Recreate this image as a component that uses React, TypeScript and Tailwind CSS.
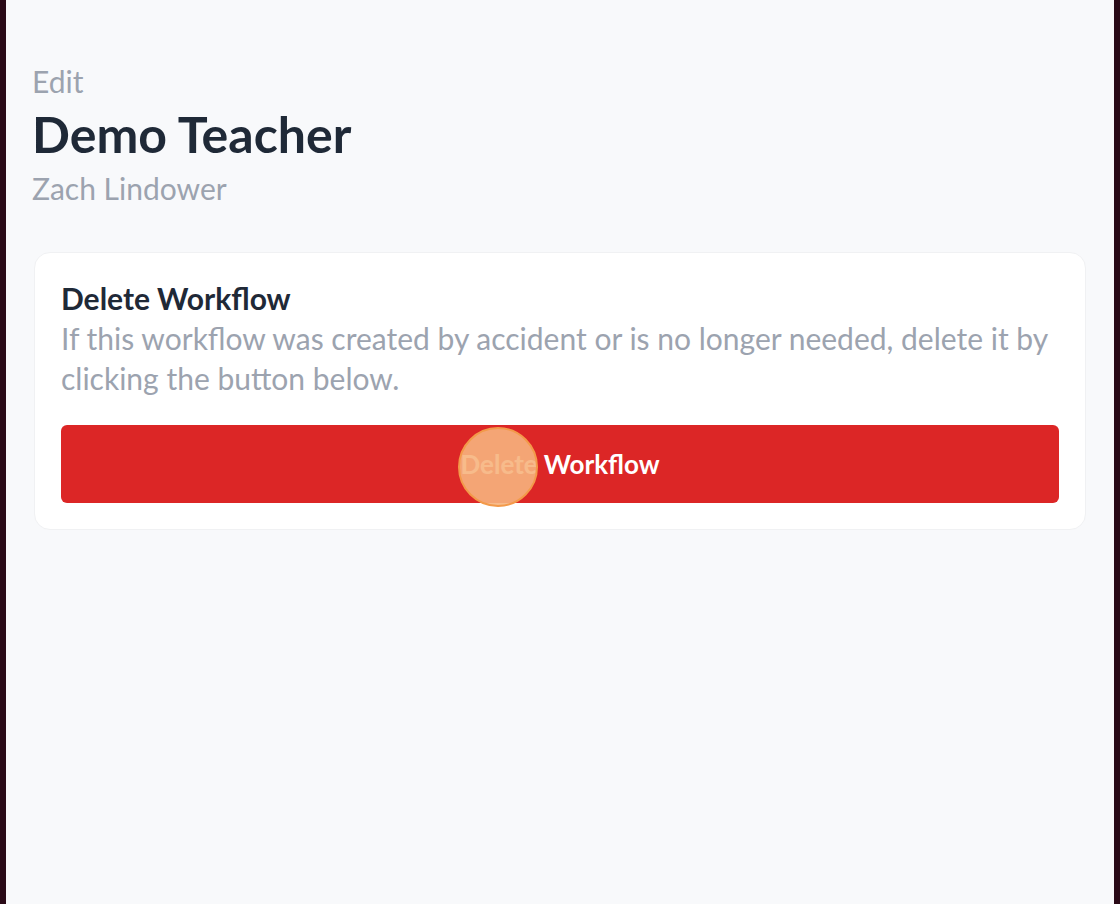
export default function App() {
    return (
        <div
            className="flex h-[904px] w-[1120px] bg-[#2a0a17]"
            style={{ fontFamily: 'Lato, "Noto Sans", sans-serif' }}
        >
            <main className="mx-[6px] flex-1 bg-[#f8f9fb] px-[28px] pt-[61px]">
                <div className="-ml-[2px]">
                    <p className="text-[30px] leading-[40px] text-[#9ca3af]">Edit</p>
                    <h1 className="text-[50px] font-bold leading-[66px] text-[#1f2937]">Demo Teacher</h1>
                    <p className="text-[30px] leading-[42px] text-[#9ca3af]">Zach Lindower</p>
                </div>

                <section className="mt-[43px] rounded-[16px] border border-[#f0f1f3] bg-white px-[26px] pb-[26px] pt-[25px]">
                    <h2 className="text-[30px] font-bold leading-[40px] text-[#1f2937]">Delete Workflow</h2>
                    <p className="text-[30px] leading-[40px] text-[#9ca3af]">
                        If this workflow was created by accident or is no longer needed, delete it by clicking the button below.
                    </p>
                    <div className="relative mt-[27px]">
                        <button className="flex h-[78px] w-full items-center justify-center rounded-[6px] bg-[#dc2626] text-[26px] font-bold text-white">
                            Delete Workflow
                        </button>
                        {/* click marker */}
                        <span className="pointer-events-none absolute left-[397px] top-[2px] h-[80px] w-[80px] rounded-full border-2 border-[#f39a4a] bg-[#f6b47e]/90" />
                    </div>
                </section>
            </main>
        </div>
    )
}
